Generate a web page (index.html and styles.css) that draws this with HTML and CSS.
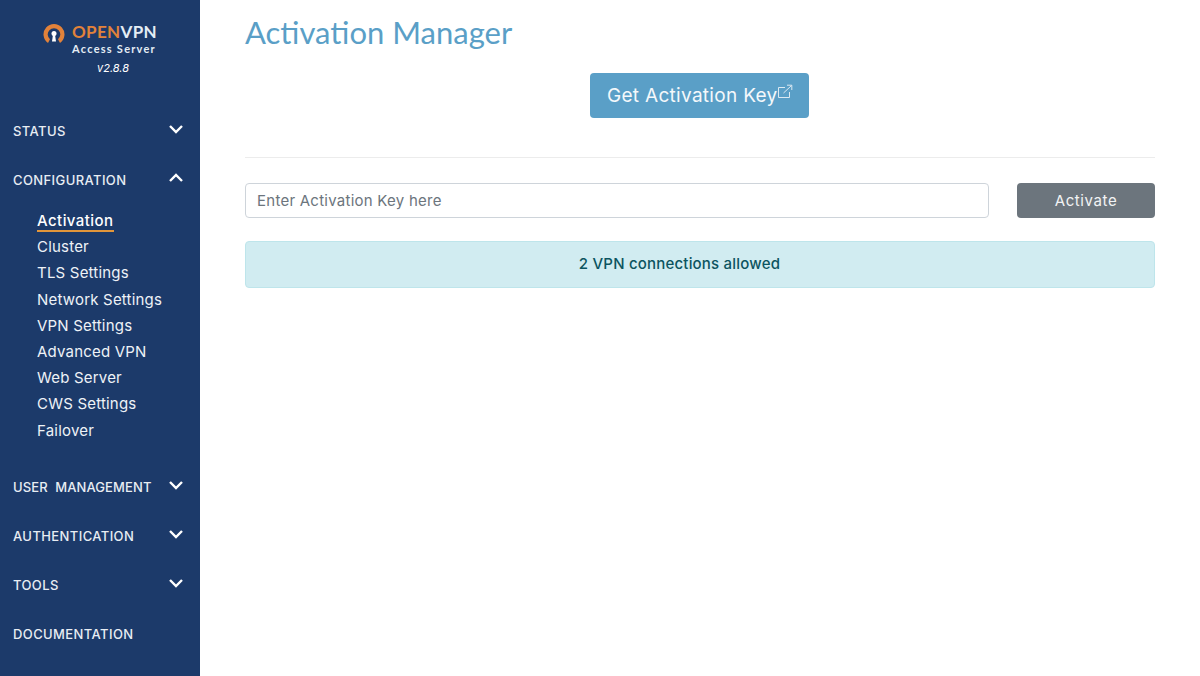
FILE: index.html
```html
<!DOCTYPE html>
<html lang="en">
<head>
<meta charset="utf-8">
<title>Activation Manager</title>
<link rel="stylesheet" href="styles.css">
</head>
<body>
<div class="app">
  <aside class="sidebar">
    <div class="brand">
      <div class="logo-row">
        <svg class="logo-icon" width="22" height="22" viewBox="0 0 22 22" aria-hidden="true">
          <path d="M5 20A10.500 10.500 0 1 1 17 20L15 16.300A6.300 6.300 0 1 0 7 16.300Z" fill="#e2823a"/>
          <circle cx="11" cy="10.500" r="2.500" fill="#fff"/>
          <path d="M10 11.500H12L13 18.500H9Z" fill="#fff"/>
        </svg>
        <div class="logo-text">
          <div class="logo-name"><span class="logo-open">OPEN</span>VPN</div>
          <div class="logo-sub">Access Server</div>
        </div>
      </div>
      <div class="version">v2.8.8</div>
    </div>
    <nav class="nav">
      <div class="nav-head"><span>STATUS</span><svg class="chev" width="16" height="10" viewBox="0 0 16 10"><path d="M2 2L8 8L14 2" /></svg></div>
      <div class="nav-head"><span>CONFIGURATION</span><svg class="chev" width="16" height="10" viewBox="0 0 16 10"><path d="M2 8L8 2L14 8" /></svg></div>
      <ul class="sub">
        <li><span class="active">Activation</span></li>
        <li>Cluster</li>
        <li>TLS Settings</li>
        <li>Network Settings</li>
        <li>VPN Settings</li>
        <li>Advanced VPN</li>
        <li>Web Server</li>
        <li>CWS Settings</li>
        <li>Failover</li>
      </ul>
      <div class="nav-head"><span class="nav-wide">USER MANAGEMENT</span><svg class="chev" width="16" height="10" viewBox="0 0 16 10"><path d="M2 2L8 8L14 2" /></svg></div>
      <div class="nav-head"><span>AUTHENTICATION</span><svg class="chev" width="16" height="10" viewBox="0 0 16 10"><path d="M2 2L8 8L14 2" /></svg></div>
      <div class="nav-head"><span>TOOLS</span><svg class="chev" width="16" height="10" viewBox="0 0 16 10"><path d="M2 2L8 8L14 2" /></svg></div>
      <div class="nav-head"><span>DOCUMENTATION</span></div>
    </nav>
  </aside>
  <main class="main">
    <h1 class="title">Activation Manager</h1>
    <div class="cta-row">
      <a class="cta">Get Activation Key<svg class="ext" width="16" height="16" viewBox="0 0 16 16"><path d="M8 3.500H1.500V13.500H12.500V8M6.500 9L14.500 1.500M10 1.200H14.800V6"/></svg></a>
    </div>
    <hr class="rule">
    <div class="form-row">
      <input class="key-input" type="text" placeholder="Enter Activation Key here">
      <button class="activate" type="button">Activate</button>
    </div>
    <div class="notice">2 VPN connections allowed</div>
  </main>
</div>
</body>
</html>
```
FILE: styles.css
```css
* { box-sizing: border-box; }
html, body { margin: 0; height: 100%; }
body { font-family: "Inter", "Open Sans", sans-serif; background: #fff; overflow: hidden; }
.app { display: flex; height: 676px; }
.sidebar { width: 200px; flex: none; background: #1c3a6a; color: #fff; display: flex; flex-direction: column; }
.brand { padding: 23px 0 0 43px; height: 106px; }
.logo-row { display: flex; gap: 7px; }
.logo-icon { flex: none; }
.logo-text { display: flex; flex-direction: column; }
.logo-name { font-size: 17px; line-height: 20px; margin-top: -1px; font-weight: 700; font-family: "Lato", sans-serif; color: #e4edf5; letter-spacing: .35px; }
.logo-open { color: #e2823a; }
.logo-sub { font-size: 11px; line-height: 12px; margin-top: 1px; font-weight: 700; font-family: "Lato", sans-serif; color: #e4edf5; letter-spacing: 1.25px; }
.version { font-size: 11px; font-style: italic; line-height: 14px; margin: 6px 0 0 54px; font-family: "Inter", sans-serif; }
.nav { display: flex; flex-direction: column; }
.nav-head { height: 49px; display: flex; align-items: center; justify-content: space-between; padding: 0 16px 0 13px; font-size: 13px; font-weight: 500; letter-spacing: .4px; color: #e8edf3; }
.nav-wide { word-spacing: 4px; letter-spacing: .1px; }
.chev { margin-top: -4px; }
.chev path { fill: none; stroke: #fff; stroke-width: 2.400; }
.sub { list-style: none; margin: 4px 0 19px; padding: 0 0 0 37px; font-size: 15px; font-weight: 400; letter-spacing: .2px; color: #eef2f7; }
.sub li { height: 26.200px; line-height: 26px; }
.active { display: inline-block; height: 24px; font-weight: 500; letter-spacing: .45px; border-bottom: 2px solid #e2963a; color: #fff; }
.main { flex: 1; padding: 13px 45px 0; }
.title { margin: 0; font-family: "Lato", sans-serif; font-size: 31px; line-height: 38px; font-weight: 400; color: #5a9fc7; }
.cta-row { display: flex; justify-content: center; margin-top: 22px; padding-right: 1px; }
.cta { height: 45px; width: 219px; border-radius: 4px; background: #5a9fc7; color: #f4f8fb; font-size: 19px; letter-spacing: .3px; display: flex; align-items: center; padding-left: 17px; }
.ext { margin: -8px 0 0 0; }
.ext path { fill: none; stroke: #dbe9f2; stroke-width: 1; }
.rule { border: 0; border-top: 1px solid #ececec; margin: 39px 0 25px; }
.form-row { display: flex; justify-content: space-between; }
.key-input { width: 744px; height: 35px; border: 1px solid #ced4da; border-radius: 4px; padding: 0 11px; font: 15px "Inter", sans-serif; letter-spacing: .25px; }
.key-input::placeholder { color: #6c757d; opacity: 1; }
.activate { width: 138px; height: 35px; border: 0; border-radius: 4px; background: #6c757d; color: #f2f3f4; font: 15px "Inter", sans-serif; letter-spacing: .6px; }
.notice { margin-top: 23px; height: 47px; border: 1px solid #bee5eb; border-radius: 4px; background: #d1ecf1; color: #0c5460; font-size: 15px; font-weight: 500; letter-spacing: .2px; display: flex; align-items: center; justify-content: center; padding: 0 41px 2px 0; }
```
